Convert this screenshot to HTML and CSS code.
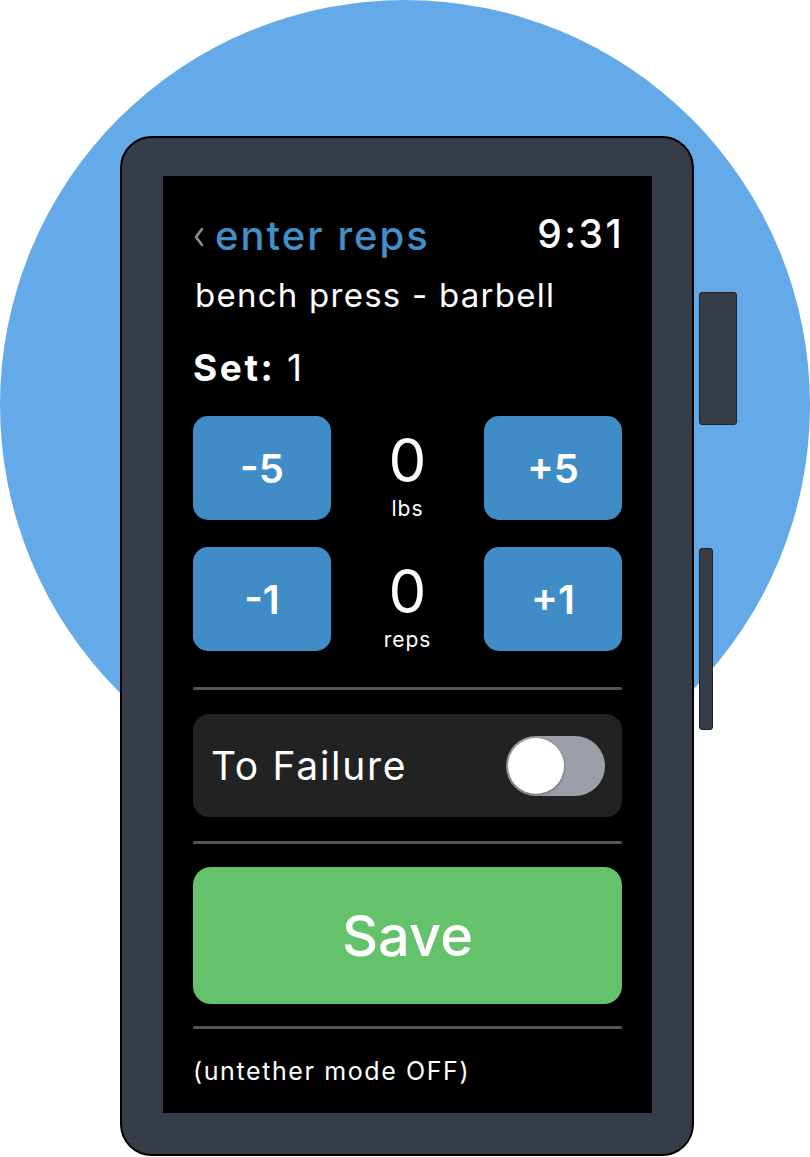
FILE: index.html
```html
<!DOCTYPE html>
<html lang="en">
<head>
<meta charset="utf-8">
<title>enter reps</title>
<link rel="stylesheet" href="styles.css">
</head>
<body>
<div class="stage">
  <div class="halo"></div>
  <div class="watch">
    <div class="side-btn side-btn--crown"></div>
    <div class="side-btn side-btn--slim"></div>
    <div class="screen">
      <div class="header">
        <div class="back">
          <svg class="chevron" width="12" height="22" viewBox="0 0 12 22"><polyline points="9,3 3,11 9,19" fill="none" stroke="#8e8e93" stroke-width="2.6" stroke-linecap="round" stroke-linejoin="round"/></svg>
          <span class="back-title">enter reps</span>
        </div>
        <span class="clock">9:31</span>
      </div>
      <div class="exercise">bench press - barbell</div>
      <div class="set"><b>Set:</b> 1</div>
      <div class="steppers">
        <button class="step">-5</button>
        <div class="value"><span class="num">0</span><span class="unit">lbs</span></div>
        <button class="step">+5</button>
        <button class="step">-1</button>
        <div class="value"><span class="num">0</span><span class="unit">reps</span></div>
        <button class="step">+1</button>
      </div>
      <hr class="divider divider--first">
      <div class="toggle-card">
        <span class="toggle-label">To Failure</span>
        <span class="switch"><span class="knob"></span></span>
      </div>
      <hr class="divider">
      <button class="save">Save</button>
      <hr class="divider">
      <div class="footer">(untether mode OFF)</div>
    </div>
  </div>
</div>
</body>
</html>
```

FILE: styles.css
```css
* { box-sizing: border-box; }
html, body { margin: 0; padding: 0; background: #fff; }
body { font-family: Inter, "Noto Sans", "Liberation Sans", sans-serif; color: #fff; }

.stage {
  position: relative;
  width: 810px;
  height: 1157px;
  overflow: hidden;
  padding: 136px 0 0 120px;
}
.halo {
  position: absolute;
  left: 0;
  top: 0;
  width: 810px;
  height: 810px;
  border-radius: 50%;
  background: #64aae8;
}
.watch {
  position: relative;
  width: 574px;
  height: 1020px;
  border: 2px solid #000;
  border-radius: 32px;
  background: #363d48;
  padding: 38px 40px 41px 41px;
}
.side-btn {
  position: absolute;
  left: 577px;
  background: #363d48;
  border: 1px solid #1c2027;
  border-radius: 3px;
}
.side-btn--crown { top: 154px; width: 38px; height: 133px; }
.side-btn--slim { top: 410px; width: 14px; height: 182px; }

.screen {
  height: 100%;
  background: #000;
  padding: 0 30px;
  display: flex;
  flex-direction: column;
}

.header {
  margin-top: 35px;
  display: flex;
  justify-content: space-between;
  align-items: baseline;
  height: 46px;
  line-height: 46px;
}
.back { display: flex; align-items: center; gap: 10px; }
.chevron { display: block; margin-top: 2px; }
.back-title { color: #4090c9; font-size: 40px; font-weight: 500; letter-spacing: 2px; }
.clock { font-size: 39px; font-weight: 500; letter-spacing: 2.4px; margin-right: -2px; }

.exercise {
  margin-top: 18px;
  font-size: 33px;
  line-height: 40px;
  letter-spacing: 1.25px;
  padding-left: 2px;
}
.set {
  margin-top: 33px;
  font-size: 37px;
  line-height: 40px;
  letter-spacing: 1px;
}
.set b { font-weight: 700; letter-spacing: 2.6px; }

.steppers {
  margin-top: 28px;
  display: grid;
  grid-template-columns: 138px 1fr 138px;
  grid-auto-rows: 104px;
  row-gap: 27px;
}
.step {
  border: 0;
  border-radius: 15px;
  background: #3f8cc6;
  color: #fff;
  font-family: inherit;
  font-size: 40px;
  font-weight: 600;
  padding: 0;
}
.value {
  display: flex;
  flex-direction: column;
  align-items: center;
  padding-top: 14px;
}
.num { font-size: 60px; line-height: 60px; font-weight: 400; }
.unit { margin-top: 8px; font-size: 21px; line-height: 22px; letter-spacing: 1px; }

.divider {
  margin: 24px 0 0;
  height: 3px;
  border: 0;
  border-radius: 2px;
  background: #555;
  width: 100%;
}
.divider--first { margin-top: 36px; }

.toggle-card {
  margin-top: 24px;
  height: 103px;
  border-radius: 16px;
  background: #222;
  display: flex;
  align-items: center;
  justify-content: space-between;
  padding: 0 17px 0 18px;
}
.toggle-label { font-size: 39px; letter-spacing: 1.7px; }
.switch {
  position: relative;
  width: 99px;
  height: 60px;
  border-radius: 30px;
  background: #9c9fa8;
  display: flex;
  align-items: center;
  padding: 0 2px;
}
.knob {
  width: 56px;
  height: 56px;
  border-radius: 50%;
  background: #fff;
  box-shadow: 0 1px 3px rgba(0,0,0,0.35);
}

.save {
  margin-top: 23px;
  height: 137px;
  border: 0;
  border-radius: 18px;
  background: #64c26a;
  color: #fff;
  font-family: inherit;
  font-size: 56px;
  font-weight: 500;
  padding: 0;
}
.save + .divider { margin-top: 22px; }

.footer {
  margin-top: 27px;
  font-size: 25px;
  line-height: 30px;
  letter-spacing: 1.6px;
}
```
